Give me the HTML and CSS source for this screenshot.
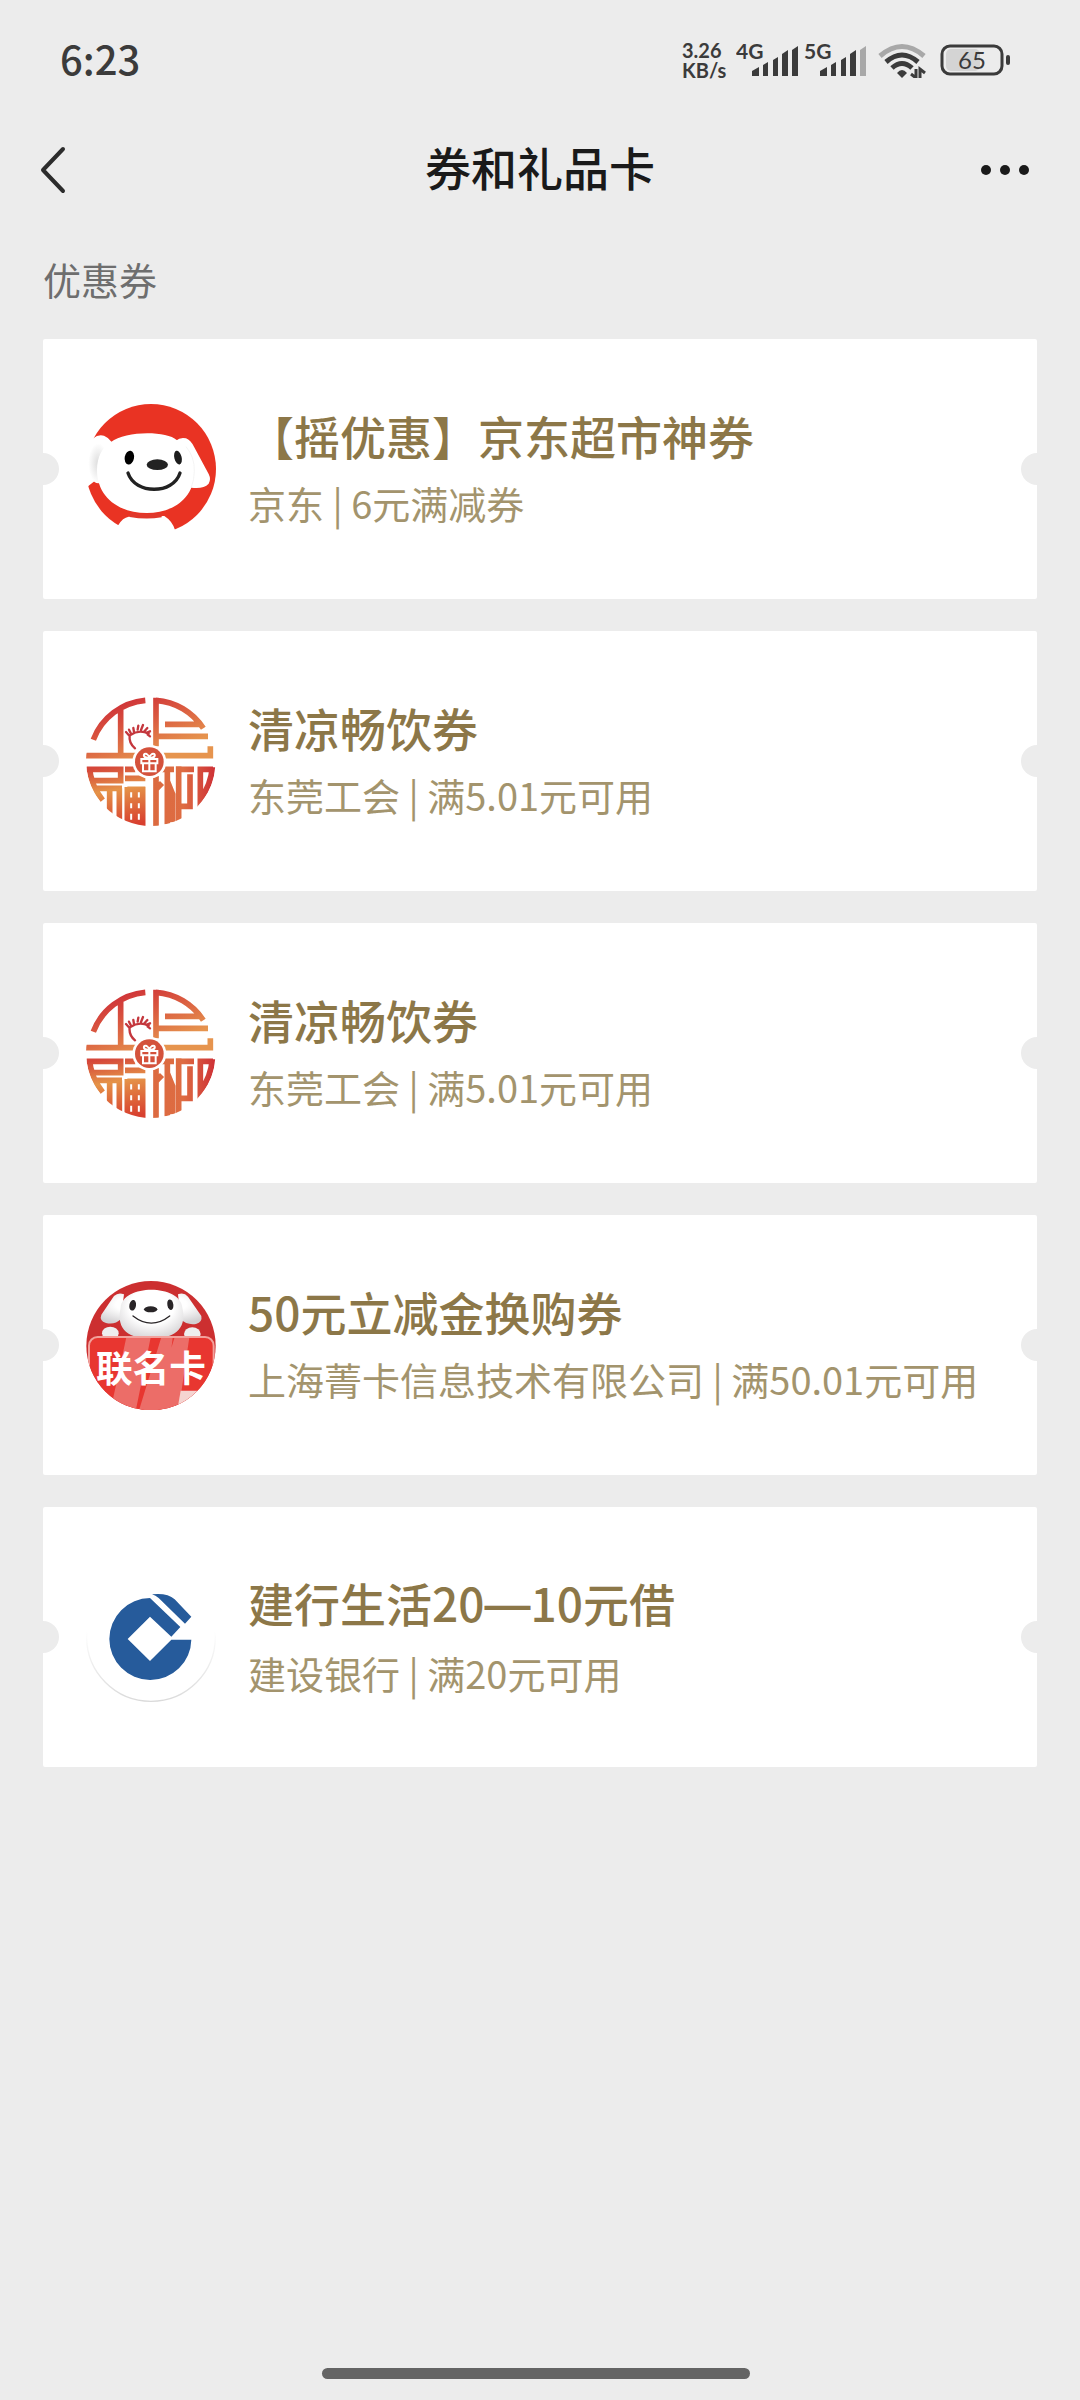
FILE: index.html
```html
<!DOCTYPE html>
<html lang="zh-CN">
<head>
<meta charset="utf-8">
<meta name="viewport" content="width=device-width, initial-scale=1">
<title>券和礼品卡</title>
<link rel="stylesheet" href="styles.css">
</head>
<body>
<svg class="defs" width="0" height="0" aria-hidden="true">
  <defs>
    <clipPath id="round"><circle cx="243" cy="240" r="195"/></clipPath>
    <linearGradient id="warmTop" gradientUnits="userSpaceOnUse" x1="150" y1="60" x2="220" y2="240">
      <stop offset="0" stop-color="#cf3238"/><stop offset=".4" stop-color="#d9553f"/><stop offset="1" stop-color="#e6944e"/>
    </linearGradient>
    <linearGradient id="warmBottom" gradientUnits="userSpaceOnUse" x1="120" y1="255" x2="150" y2="435">
      <stop offset="0" stop-color="#d5463a"/><stop offset=".4" stop-color="#e59348"/><stop offset="1" stop-color="#d8402f"/>
    </linearGradient>
    <linearGradient id="warmRight" gradientUnits="userSpaceOnUse" x1="250" y1="300" x2="430" y2="300">
      <stop offset="0" stop-color="#dc6a40"/><stop offset=".5" stop-color="#de6c42"/><stop offset="1" stop-color="#cf3437"/>
    </linearGradient>
    <symbol id="union" viewBox="48 45 390 390">
      <g clip-path="url(#round)">
        <g fill="none" stroke="url(#warmTop)" stroke-width="17">
          <path d="M70 176A185 185 0 0 1 226 58M152 84V218M48 224H205"/>
          <path d="M258 50V196M258 58A185 185 0 0 1 400 142M285 130H396M258 166H414M280 224H421V196"/>
        </g>
        <g fill="none" stroke="url(#warmBottom)" stroke-width="17">
          <path d="M50 265H152V299H72M58 258A185 185 0 0 0 98 358M80 322H156M119 322V405M148 322V420"/>
          <path d="M165 265H196M165 292H226M172 325H226M172 318V430M218 318V436M172 425H218M195 325V425M172 358H218M172 390H218"/>
        </g>
        <g fill="none" stroke="url(#warmRight)" stroke-width="17">
          <path d="M272 265H312M258 285V436M292 264V430M258 325L276 306M292 300L308 340V424M326 256V420M326 265H372M360 280V376H326M427 258A185 185 0 0 1 391 355V265H429"/>
        </g>
      </g>
      <circle cx="238" cy="242" r="51" fill="#fff"/>
      <circle cx="238" cy="242" r="43" fill="#d4523c"/>
      <path fill="none" stroke="#fff" stroke-width="6" d="M214 234H262V247H214ZM219 247V271H257V247M238 234V271M238 230C215 232 220 214 230 219Q237 223 238 230C261 232 256 214 246 219Q239 223 238 230"/>
      <path fill="none" stroke="#c4373d" stroke-width="7" stroke-linecap="round" d="M195 202Q176 186 179 164M178 164L168 153M184 160L177 146M192 153L190 141M203 146L205 134M213 147L219 132M224 150L232 141M231 155L240 151M233 161L240 166M181 162Q208 144 236 158"/>
    </symbol>
  </defs>
</svg>

<div class="screen">
  <div class="status">
    <time class="clock">6:23</time>
    <div class="indicators">
      <span class="speed"><span>3.26</span><span>KB/s</span></span>
      <svg class="signal" viewBox="0 -6 62 48" role="img" aria-label="4G">
        <text x="0" y="17">4G</text>
        <path d="M16 34v-5l7-4v9zM27 34V23l5-3v14zM37 34V18l5-3v19zM46 34V12l6-4v26zM56 34V8l6-4v30z"/>
      </svg>
      <svg class="signal" viewBox="0 -6 62 48" role="img" aria-label="5G">
        <text x="0" y="17">5G</text>
        <path d="M16 34v-5l7-4v9zM27 34V23l5-3v14zM37 34V18l5-3v19zM46 34V12l6-4v26z"/>
        <path class="faint" d="M56 34V8l6-4v30z"/>
      </svg>
      <svg class="wifi" viewBox="0 0 48 36" role="img" aria-label="Wi-Fi">
        <g fill="none" stroke="#3b3b3b" stroke-width="5">
          <path stroke="#a8a8a8" d="M2 14Q24-5 46 14"/>
          <path d="M8 20Q24 6 40 20"/>
          <path d="M14 26Q24 17 34 26"/>
        </g>
        <path fill="#3b3b3b" d="M19 31q5-6 10 0l-5 5z"/>
        <path fill="none" stroke="#3b3b3b" stroke-width="3" d="M38 27v9l-5-4M42 36v-9l5 4"/>
      </svg>
      <svg class="battery" viewBox="0 0 70 32" role="img" aria-label="65%">
        <rect x="6" y="5" width="34" height="22" rx="5" fill="#d4d4d4"/>
        <rect x="2" y="2" width="60" height="28" rx="8" fill="none" stroke="#3b3b3b" stroke-width="3"/>
        <rect x="66" y="11" width="4" height="10" rx="2" fill="#3b3b3b"/>
        <text x="32" y="25" text-anchor="middle">65</text>
      </svg>
    </div>
  </div>

  <header class="nav">
    <button class="nav-btn" type="button" aria-label="返回">
      <svg width="26" height="48" viewBox="0 0 26 48"><path d="M23 3L3 24l20 21" fill="none" stroke="#2c2c2c" stroke-width="4" stroke-linecap="round" stroke-linejoin="round"/></svg>
    </button>
    <h1>券和礼品卡</h1>
    <button class="nav-btn more" type="button" aria-label="更多">
      <svg width="50" height="12" viewBox="0 0 50 12" fill="#1a1a1a"><circle cx="6" cy="6" r="5"/><circle cx="25" cy="6" r="5"/><circle cx="44" cy="6" r="5"/></svg>
    </button>
  </header>

  <main>
    <h2>优惠券</h2>
    <ul class="coupons">
      <li><a class="coupon" href="#">
        <svg class="logo" viewBox="168 222 390 390" aria-hidden="true">
          <defs>
            <radialGradient id="earShade"><stop offset="0" stop-color="#dcdcdc"/><stop offset="1" stop-color="#fff"/></radialGradient>
          </defs>
          <circle cx="363" cy="417" r="195" fill="#e93323"/>
          <path fill="#fff" d="M160 330L190 325Q204 312 222 317Q235 322 245 336L225 440L203 446L175 468L150 480Z"/>
          <ellipse cx="205" cy="400" rx="30" ry="60" fill="url(#earShade)"/>
          <path fill="#fff" d="M438 332Q450 321 468 325Q482 331 492 350L536 432Q544 448 536 461Q520 478 484 473Z"/>
          <path fill="#fff" d="M243 336C285 302 410 302 440 330C475 350 493 390 493 430C490 510 425 549 350 549C265 549 201 500 201 420C201 380 218 350 243 336Z"/>
          <path fill="none" stroke="#eee" stroke-width="2" d="M468 350Q494 380 493 424Q493 450 483 474"/>
          <path fill="#fff" d="M168 640L265 585Q278 563 296 560L403 558Q427 573 435 600L460 640Z"/>
          <path fill="#e0382b" d="M299 548Q348 555 395 548V562Q348 570 299 561Z"/>
          <ellipse cx="298" cy="383" rx="14" ry="21" transform="rotate(10 298 383)"/>
          <ellipse cx="444" cy="383" rx="11" ry="21" fill="#1d1d1d" transform="rotate(-14 444 383)"/>
          <ellipse cx="382" cy="404" rx="32" ry="16" fill="#222"/>
          <path d="M294 429C315 494 430 494 450 429" fill="none" stroke="#222" stroke-width="10" stroke-linecap="round"/>
        </svg>
        <span class="text"><strong>【摇优惠】京东超市神券</strong><span class="note">京东 | 6元满减券</span></span>
      </a></li>
      <li><a class="coupon" href="#">
        <svg class="logo" aria-hidden="true"><use href="#union"/></svg>
        <span class="text"><strong>清凉畅饮券</strong><span class="note">东莞工会 | 满5.01元可用</span></span>
      </a></li>
      <li><a class="coupon" href="#">
        <svg class="logo" aria-hidden="true"><use href="#union"/></svg>
        <span class="text"><strong>清凉畅饮券</strong><span class="note">东莞工会 | 满5.01元可用</span></span>
      </a></li>
      <li><a class="coupon" href="#">
        <svg class="logo" viewBox="48 42 390 390" aria-hidden="true">
          <defs>
            <clipPath id="joy"><circle cx="243" cy="239" r="194"/></clipPath>
            <clipPath id="plate"><rect x="57" y="213" width="374" height="260" rx="26"/></clipPath>
            <radialGradient id="fur" cx=".5" cy=".35" r=".7"><stop offset=".5" stop-color="#fff"/><stop offset="1" stop-color="#d2d0d2"/></radialGradient>
          </defs>
          <g clip-path="url(#joy)">
            <path fill="#cc2f30" d="M48 42H438V440H48Z"/>
            <path fill="url(#fur)" d="M162 85Q145 78 132 90L94 146Q87 164 108 171Q135 177 152 160ZM324 85Q342 78 354 92L394 150Q398 168 378 174Q350 178 332 160Z"/>
            <ellipse cx="121" cy="202" rx="25" ry="20" fill="#eee"/><ellipse cx="367" cy="204" rx="25" ry="20" fill="#eee"/>
            <path fill="url(#fur)" d="M152 125C156 53 332 53 337 125C350 177 326 218 244 218C160 218 140 177 152 125Z"/>
            <ellipse cx="188" cy="118" rx="10" ry="16" fill="#292527" transform="rotate(10 188 118)"/>
            <ellipse cx="301" cy="116" rx="9" ry="16" fill="#292527" transform="rotate(-10 301 116)"/>
            <ellipse cx="242" cy="130" rx="20" ry="9" fill="#292527"/>
            <path d="M189 150Q244 193 299 150" fill="none" stroke="#292527" stroke-width="4" stroke-linecap="round"/>
            <g clip-path="url(#plate)">
              <path fill="#e83630" d="M48 200H438V440H48Z"/>
              <path fill="#ec6d68" d="M172 200H245L196 440H120ZM278 200H310L280 440H205ZM318 200H360L325 440H245Z"/>
              <path fill="#f5d4d1" d="M332 374H400L370 432H322Z"/>
            </g>
            <rect x="57" y="213" width="374" height="260" rx="26" fill="none" stroke="#f2a19c" stroke-width="6"/>
          </g>
          <text class="plate-text" x="243" y="347" text-anchor="middle">联名卡</text>
        </svg>
        <span class="text"><strong>50元立减金换购券</strong><span class="note">上海菁卡信息技术有限公司 | 满50.01元可用</span></span>
      </a></li>
      <li><a class="coupon" href="#">
        <svg class="logo" viewBox="48 48 390 390" aria-hidden="true">
          <defs><linearGradient id="rim" x1="0" y1="0" x2="0" y2="1"><stop offset=".45" stop-color="#fff"/><stop offset="1" stop-color="#dadada"/></linearGradient></defs>
          <circle cx="243" cy="243" r="193" fill="#fff" stroke="url(#rim)" stroke-width="4"/>
          <path fill="#265b9b" d="M240 126L331 213L304 242L240 182L173 249L240 315L304 251H364A123 123 0 1 1 240 126Z"/>
          <path fill="#265b9b" d="M246 115Q292 110 314 130L364 182L345 203L266 126Q257 118 246 115Z"/>
        </svg>
        <span class="text"><strong>建行生活20<span class="dash">—</span>10元借</strong><span class="note">建设银行 | 满20元可用</span></span>
      </a></li>
    </ul>
  </main>

  <footer class="home"><span class="home-bar"></span></footer>
</div>
</body>
</html>
```
FILE: styles.css
```css
* {
  box-sizing: border-box;
}

body {
  margin: 0;
  background: #ececec;
  color: #1a1a1a;
  font-family: "Noto Sans CJK SC", sans-serif;
}

.defs {
  position: absolute;
}

.screen {
  display: flex;
  flex-direction: column;
  min-height: 100vh;
}

.status {
  display: flex;
  align-items: center;
  justify-content: space-between;
  height: 120px;
  padding: 0 70px 0 60px;
  color: #3b3b3b;
}

.clock {
  padding-bottom: 4px;
  font-size: 40px;
  font-weight: 500;
}

.indicators {
  display: flex;
  align-items: center;
  font-family: Lato, sans-serif;
}

.speed {
  display: flex;
  flex-direction: column;
  width: 54px;
  font-size: 20px;
  font-weight: 700;
  line-height: 20px;
}

.signal {
  width: 62px;
  height: 48px;
  margin-right: 6px;
  fill: #3b3b3b;
  font-size: 21px;
  font-weight: 700;
}

.signal .faint {
  fill: #a8a8a8;
}

.wifi {
  width: 48px;
  height: 36px;
  margin: 0 14px 0 6px;
}

.battery {
  width: 70px;
  height: 32px;
  fill: #3b3b3b;
  font-size: 24px;
}

.nav {
  display: grid;
  grid-template-columns: 120px 1fr 120px;
  align-items: center;
  height: 100px;
}

.nav-btn {
  display: flex;
  align-items: center;
  height: 100px;
  padding: 0 40px;
  border: 0;
  background: none;
}

.more {
  justify-content: flex-end;
  padding: 0 50px 0 0;
}

h1 {
  margin: 0;
  padding-bottom: 8px;
  font-size: 46px;
  font-weight: 500;
  line-height: 66px;
  text-align: center;
}

main {
  flex: 1;
  padding: 29px 43px;
}

h2 {
  margin: 0 0 30px;
  color: #6e6e6e;
  font-size: 38px;
  font-weight: 400;
  line-height: 60px;
}

.coupons {
  display: flex;
  flex-direction: column;
  gap: 32px;
  margin: 0;
  padding: 0;
  list-style: none;
}

.coupon {
  position: relative;
  display: flex;
  align-items: center;
  gap: 32px;
  height: 260px;
  padding: 0 43px;
  overflow: hidden;
  border-radius: 2px;
  background: #fff;
  color: #8c7748;
  text-decoration: none;
}

.coupon::before,
.coupon::after {
  content: "";
  position: absolute;
  top: 114px;
  width: 32px;
  height: 32px;
  border-radius: 50%;
  background: #ececec;
}

.coupon::before {
  left: -16px;
}

.coupon::after {
  right: -16px;
}

.logo {
  flex: none;
  width: 130px;
  height: 130px;
}

.plate-text {
  fill: #fff;
  font-size: 110px;
  font-weight: 700;
}

.text {
  display: flex;
  flex-direction: column;
  line-height: 68px;
  white-space: nowrap;
}

.text strong {
  font-size: 46px;
  font-weight: 500;
}

.dash {
  font-family: Inter, sans-serif;
}

.note {
  color: #a3946d;
  font-size: 38px;
}

.home {
  display: flex;
  justify-content: center;
  padding: 0 8px 21px 0;
}

.home-bar {
  width: 428px;
  height: 11px;
  border-radius: 6px;
  background: #646464;
}
```
